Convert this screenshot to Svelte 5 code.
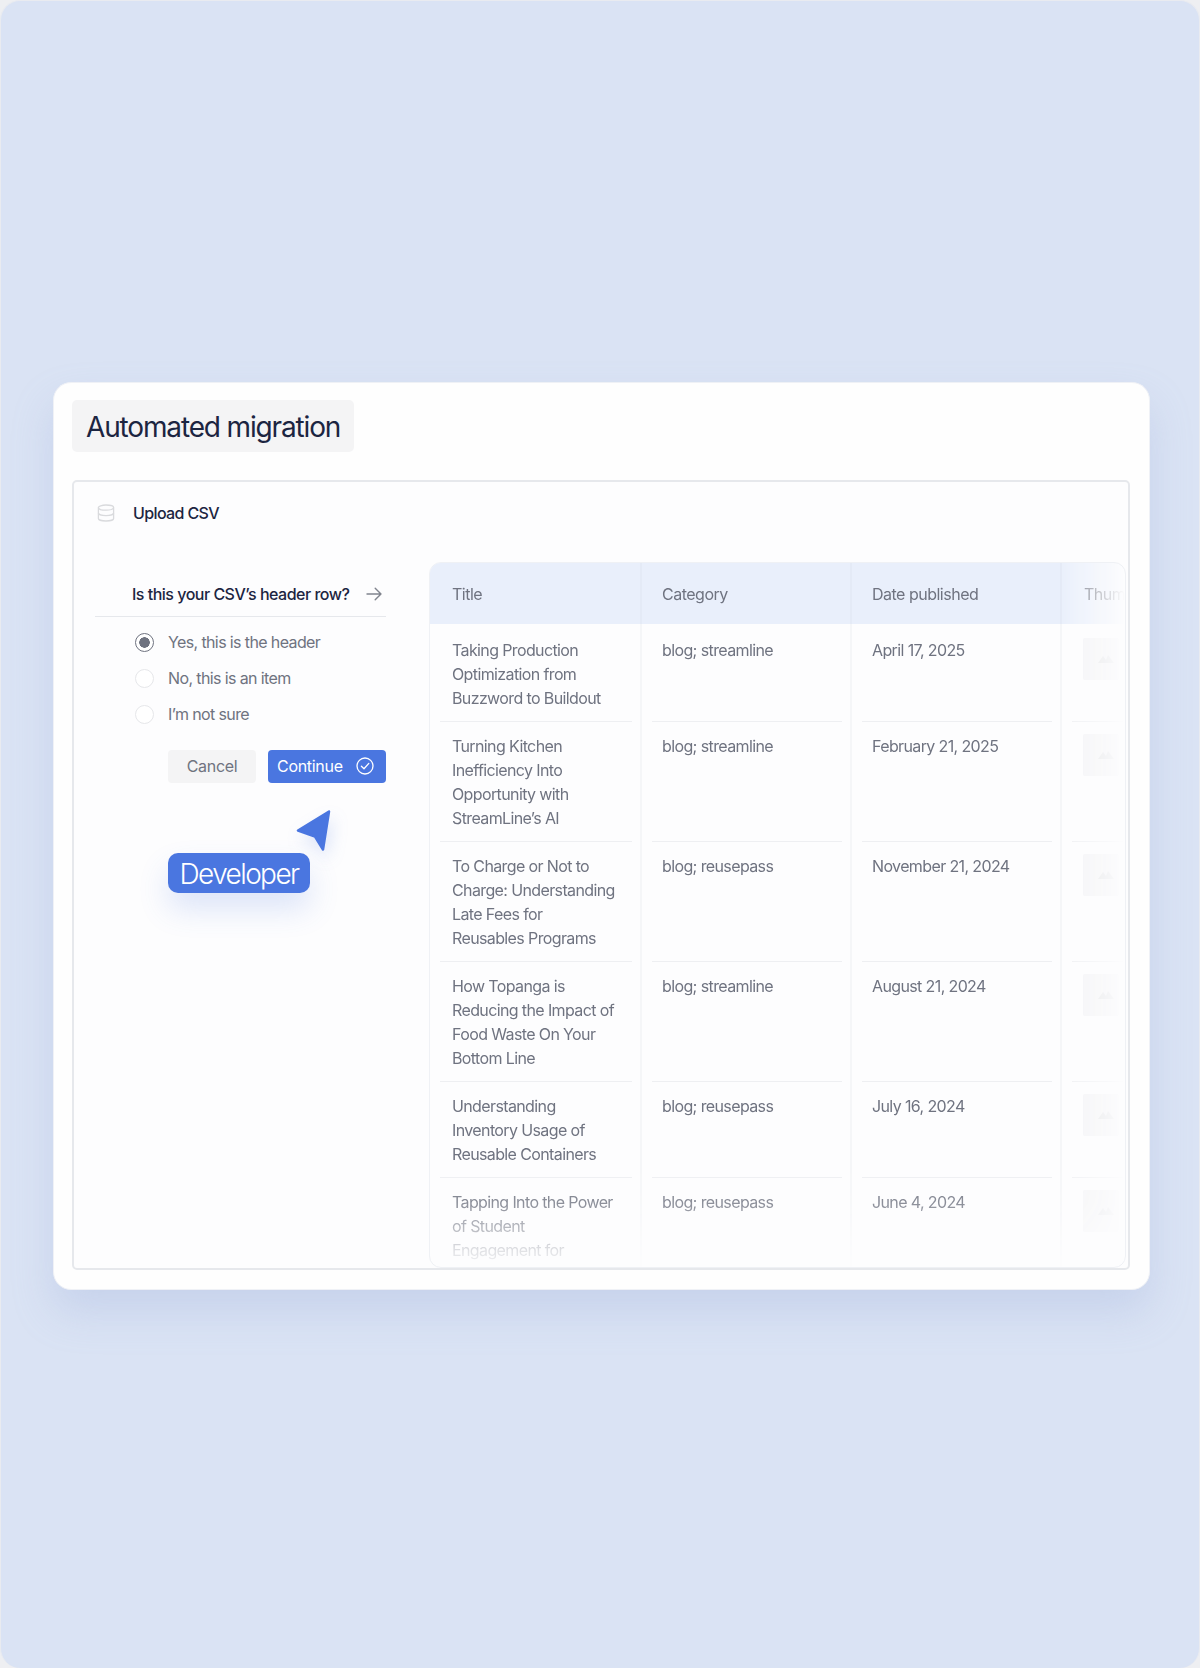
<script>
  const options = [
    { label: 'Yes, this is the header', on: true },
    { label: 'No, this is an item', on: false },
    { label: 'I’m not sure', on: false }
  ];
  const columns = ['Title', 'Category', 'Date published', 'Thumbnail'];
  const rows = [
    { t: ['Taking Production', 'Optimization from', 'Buzzword to Buildout'], c: 'blog; streamline', d: 'April 17, 2025' },
    { t: ['Turning Kitchen', 'Inefficiency Into', 'Opportunity with', 'StreamLine’s AI'], c: 'blog; streamline', d: 'February 21, 2025' },
    { t: ['To Charge or Not to', 'Charge: Understanding', 'Late Fees for', 'Reusables Programs'], c: 'blog; reusepass', d: 'November 21, 2024' },
    { t: ['How Topanga is', 'Reducing the Impact of', 'Food Waste On Your', 'Bottom Line'], c: 'blog; streamline', d: 'August 21, 2024' },
    { t: ['Understanding', 'Inventory Usage of', 'Reusable Containers'], c: 'blog; reusepass', d: 'July 16, 2024' },
    { t: ['Tapping Into the Power', 'of Student', 'Engagement for', 'Reusables Programs'], c: 'blog; reusepass', d: 'June 4, 2024' }
  ];
</script>

<div class="page">
  <section class="card">
    <h1 class="chip">Automated migration</h1>
    <div class="frame">
      <header class="head">
        <svg class="db" width="18" height="18" viewBox="0 0 18 18" fill="none" stroke="#d9dadd" stroke-width="1.3">
          <ellipse cx="9" cy="3.6" rx="7.6" ry="2.6" />
          <path d="M1.4 3.6v10.8c0 1.4 3.4 2.6 7.6 2.6s7.6-1.2 7.6-2.6V3.6" />
          <path d="M1.4 9c0 1.4 3.4 2.6 7.6 2.6s7.6-1.2 7.6-2.6" />
        </svg>
        <span>Upload CSV</span>
      </header>
      <div class="body">
        <div class="left">
          <div class="question">
            <span>Is this your CSV’s header row?</span>
            <svg width="16" height="14" viewBox="0 0 16 14" fill="none" stroke="#80848e" stroke-width="1.4" stroke-linecap="round" stroke-linejoin="round">
              <path d="M1 7h14M9.2 1.2 15 7l-5.800 5.800" />
            </svg>
          </div>
          <ul class="options">
            {#each options as o}
              <li>
                <span class="radio" class:on={o.on}></span>
                <span>{o.label}</span>
              </li>
            {/each}
          </ul>
          <div class="actions">
            <button class="cancel">Cancel</button>
            <button class="continue">
              Continue
              <svg width="18" height="18" viewBox="0 0 18 18" fill="none" stroke="#fff" stroke-width="1.3" stroke-linecap="round" stroke-linejoin="round">
                <circle cx="9" cy="9" r="8" />
                <path d="M5.400 9.300 8 11.800l4.800-5.400" />
              </svg>
            </button>
          </div>
          <svg class="pointer" width="38" height="44" viewBox="0 0 38 44">
            <path d="M34 2.500 3 21.500 20 27.500 28 40.500Z" fill="#4a76e0" stroke="#4a76e0" stroke-width="2.500" stroke-linejoin="round" />
          </svg>
          <div class="tag">Developer</div>
        </div>

        <div class="table">
          <div class="fade">
            <div class="thead">
              {#each columns as c}
                <div class="th">{c}</div>
              {/each}
            </div>
            {#each rows as r, i}
              <div class="tr" class:first={i === 0}>
                <div class="td"><div class="inner title">
                  {#each r.t as line}<div>{line}</div>{/each}
                </div></div>
                <div class="td"><div class="inner">{r.c}</div></div>
                <div class="td"><div class="inner">{r.d}</div></div>
                <div class="td"><div class="inner thumbcell">
                  <div class="thumb">
                    <svg width="16" height="8" viewBox="0 0 16 8" fill="#dfe0e3">
                      <path d="M0 8 5 1l3 4 2-5 6 8Z" />
                    </svg>
                  </div>
                </div></div>
              </div>
            {/each}
          </div>
        </div>
      </div>
    </div>
  </section>
</div>

<style>
  :global(body) {
    margin: 0;
    background: #eeeff2;
  }
  * {
    box-sizing: border-box;
  }
  .page {
    width: 1200px;
    height: 1668px;
    padding: 381px 49px 0 52px;
    background: #dae3f4;
    border: 1px solid #e9ebf0;
    border-width: 1px 1px 0 1px;
    border-radius: 20px;
    overflow: hidden;
    font-family: Inter, 'Liberation Sans', sans-serif;
    color: #6f7380;
    font-size: 16px;
    letter-spacing: -0.62px;
  }
  .card {
    height: 908px;
    padding: 17px 18px 19px;
    background: #fefefe;
    border: 1px solid #eff1f6;
    border-radius: 18px;
    box-shadow: 0 22px 40px rgba(150, 170, 215, 0.28);
    display: flex;
    flex-direction: column;
    align-items: flex-start;
    gap: 28px;
  }
  .chip {
    margin: 0;
    height: 52px;
    width: 282px;
    padding: 2px 0 0 14px;
    display: flex;
    align-items: center;
    background: #f4f4f5;
    border-radius: 5px;
    font-size: 28px;
    font-weight: 400;
    letter-spacing: -1.15px;
    color: #1c2541;
    white-space: nowrap;
  }
  .frame {
    width: 1058px;
    flex: 1;
    border: 2px solid #e6e8ec;
    border-radius: 5px;
    background: #fdfdfe;
    overflow: hidden;
  }
  .head {
    height: 80px;
    padding: 0 0 18px 23px;
    display: flex;
    align-items: center;
    gap: 18px;
    color: #1c2541;
    font-weight: 500;
  }
  .body {
    display: flex;
    align-items: flex-start;
    padding-left: 21px;
    gap: 43px;
  }
  .left {
    position: relative;
    width: 291px;
    flex: none;
  }
  .question {
    height: 55px;
    padding: 10px 4px 0 37px;
    border-bottom: 1px solid #e6e8ec;
    display: flex;
    align-items: center;
    justify-content: space-between;
    color: #1c2541;
    font-weight: 500;
    letter-spacing: -0.5px;
  }
  .options {
    list-style: none;
    margin: 7px 0 0;
    padding: 0 0 0 40px;
  }
  .options li {
    height: 36px;
    display: flex;
    align-items: center;
    gap: 14px;
    white-space: nowrap;
  }
  .radio {
    width: 19px;
    height: 19px;
    flex: none;
    border: 1.500px solid #e6e7ea;
    border-radius: 50%;
    background: #fff;
  }
  .radio.on {
    border: 1.500px solid #6f7380;
    background: radial-gradient(circle, #6f7380 0 5px, #fff 5.500px);
  }
  .actions {
    margin: 18px 0 0 73px;
    display: flex;
    gap: 12px;
  }
  button {
    height: 33px;
    border: 0;
    border-radius: 4px;
    font: inherit;
    letter-spacing: -0.3px;
    display: flex;
    align-items: center;
    justify-content: center;
    padding: 0 0 1px;
  }
  .cancel {
    width: 88px;
    background: #f4f4f5;
    color: #6f7380;
  }
  .continue {
    width: 118px;
    padding-left: 9px;
    justify-content: flex-start;
    gap: 13px;
    background: #4a76e0;
    color: #fff;
  }
  .pointer {
    position: absolute;
    left: 200px;
    top: 247px;
    filter: drop-shadow(3px 8px 8px rgba(74, 118, 224, 0.18));
  }
  .tag {
    position: absolute;
    left: 73px;
    top: 291px;
    width: 142px;
    height: 40px;
    padding-top: 2px;
    background: #4a76e0;
    color: #fff;
    border-radius: 10px;
    display: flex;
    align-items: center;
    justify-content: center;
    font-size: 28px;
    font-weight: 300;
    letter-spacing: -1.6px;
    box-shadow: 0 16px 30px rgba(74, 118, 224, 0.18);
  }
  .table {
    width: 697px;
    height: 706px;
    flex: none;
    border: 1px solid #eff1f5;
    border-radius: 12px;
    overflow: hidden;
  }
  .fade {
    height: 100%;
    -webkit-mask-image: linear-gradient(to bottom, #000 600px, rgba(0, 0, 0, 0.8) 640px, rgba(0, 0, 0, 0.5) 664px, rgba(0, 0, 0, 0.2) 688px, rgba(0, 0, 0, 0.05) 706px),
      linear-gradient(to right, #000 630px, transparent 695px);
    -webkit-mask-composite: source-in;
    mask-image: linear-gradient(to bottom, #000 600px, rgba(0, 0, 0, 0.8) 640px, rgba(0, 0, 0, 0.5) 664px, rgba(0, 0, 0, 0.2) 688px, rgba(0, 0, 0, 0.05) 706px),
      linear-gradient(to right, #000 630px, transparent 695px);
    mask-composite: intersect;
  }
  .thead,
  .tr {
    display: grid;
    grid-template-columns: 212px 210px 210px 210px;
    width: 842px;
  }
  .thead {
    background: #e9effb;
  }
  .th {
    height: 61px;
    padding-left: 20px;
    display: flex;
    align-items: center;
    border-right: 2px solid #e4eaf6;
    white-space: nowrap;
    letter-spacing: -0.5px;
  }
  .th:first-child {
    padding-left: 22px;
  }
  .th:last-child {
    padding-left: 22px;
  }
  .td {
    padding: 0 8px 0 10px;
    border-right: 2px solid #f5f6f8;
    display: flex;
  }
  .inner {
    flex: 1;
    padding: 12px 0 11px 10px;
    line-height: 24px;
    border-bottom: 1px solid #eeeff2;
    white-space: nowrap;
  }
  .first .inner {
    padding-top: 14px;
  }
  .title {
    padding-left: 12px;
  }
  .thumbcell {
    padding-left: 0;
  }
  .thumb {
    width: 36px;
    height: 42px;
    margin-left: 11px;
    background: #f3f3f5;
    border-radius: 2px;
    display: flex;
    align-items: flex-start;
    justify-content: center;
    padding: 17px 0 0 10px;
  }
</style>
